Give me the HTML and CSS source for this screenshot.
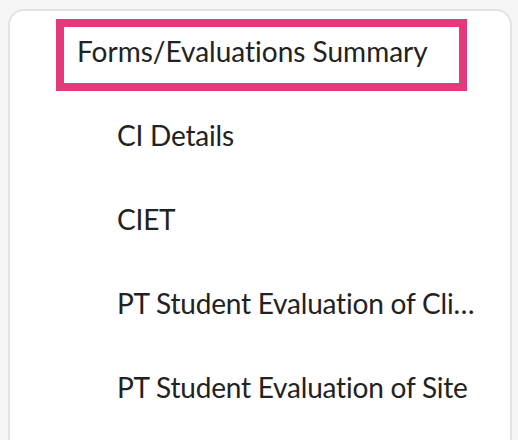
FILE: index.html
```html
<!DOCTYPE html>
<html>
<head>
<meta charset="utf-8">
<link rel="stylesheet" href="styles.css">
</head>
<body>
<div class="card">
  <div class="active">Forms/Evaluations Summary</div>
  <ul class="items">
    <li class="item"><span class="label">CI Details</span></li>
    <li class="item"><span class="label">CIET</span></li>
    <li class="item"><span class="label">PT Student Evaluation of Clinical Instruction</span></li>
    <li class="item"><span class="label">PT Student Evaluation of Site</span></li>
  </ul>
</div>
</body>
</html>
```
FILE: styles.css
```css
html, body {
  margin: 0;
  height: 100%;
  overflow: hidden;
}
body {
  background: #f5f5f5;
  padding: 9px 6px 0 8px;
  box-sizing: border-box;
  font-family: Lato, "Noto Sans", sans-serif;
  font-variant-ligatures: none;
  color: #222;
}
.card {
  background: #fff;
  border: 2px solid #e3e3e3;
  border-bottom: none;
  border-radius: 16px 16px 0 0;
  height: 431px;
  box-sizing: border-box;
  padding-top: 8px;
  overflow: hidden;
}
.active {
  margin-left: 46px;
  width: 411px;
  height: 72px;
  box-sizing: border-box;
  border: 8px solid #e43a7b;
  font-size: 28px;
  line-height: 1.2;
  padding: 8px 0 0 13px;
  white-space: nowrap;
}
.items {
  list-style: none;
  margin: 2px 0 0;
  padding: 0 0 0 107px;
}
.item {
  height: 84px;
  line-height: 84px;
  font-size: 28px;
  letter-spacing: -0.2px;
  width: 358px;
  white-space: nowrap;
  overflow: hidden;
  text-overflow: ellipsis;
}
```
